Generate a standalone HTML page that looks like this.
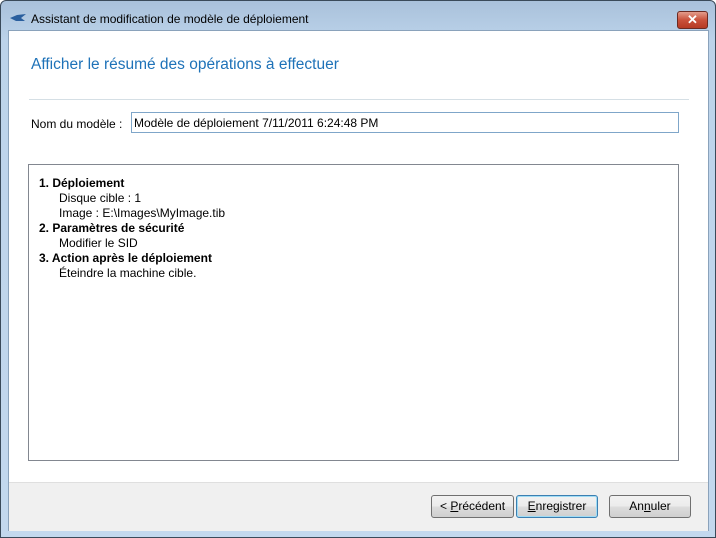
<!DOCTYPE html>
<html><head><meta charset="utf-8"><style>
body{margin:0;width:716px;height:538px;overflow:hidden;font-family:"Liberation Sans",sans-serif;font-size:12px;color:#000;}
.frame{position:absolute;left:0;top:0;width:714px;height:536px;border:1px solid #3a4a5a;border-radius:6px 6px 0 0;background:linear-gradient(#a9c1db,#bcd3ea 40px,#c3d8ee);}
.title{position:absolute;left:30px;top:11px;font-size:12px;color:#000;}
.close{position:absolute;left:676px;top:10px;width:29px;height:16px;border:1px solid #6b2a22;border-radius:3px;background:linear-gradient(#e39d8c,#c9513b 50%,#b63a24);color:#fff;font-weight:bold;text-align:center;line-height:15px;font-size:13px;}
.client{position:absolute;left:7px;top:29px;width:701px;height:501px;background:#fff;border:1px solid #8aa2bb;box-sizing:border-box;}
.footer{position:absolute;left:0;top:451px;width:699px;height:48px;background:#f0f0f0;border-top:1px solid #dfdfdf;}
.h{position:absolute;left:22px;top:25px;font-size:15.5px;color:#1e72b8;}
.sep{position:absolute;left:20px;top:68px;width:660px;height:1px;background:#d5dfe5;}
.lbl{position:absolute;left:22px;top:86px;}
.inp{position:absolute;left:122px;top:81px;width:548px;height:21px;border:1px solid #7fa6c9;box-sizing:border-box;padding:3px 2px;}
.box{position:absolute;left:19px;top:133px;width:651px;height:297px;border:1px solid #828790;box-sizing:border-box;padding:11px 10px;line-height:15px;}
.box b{display:block}.box div{padding-left:20px}
.btn{position:absolute;height:23px;border:1px solid #707070;border-radius:3px;background:linear-gradient(#f2f2f2,#ebebeb 50%,#dddddd 51%,#cfcfcf);box-sizing:border-box;text-align:center;line-height:20px;}
</style></head><body>
<div class="frame">
<svg style="position:absolute;left:8px;top:12px" width="18" height="10"><path d="M1 5 L8 2 L17 1 L12 5 L16 8 L7 8 Z" fill="#2a5f9e"/></svg>
<div class="title">Assistant de modification de modèle de déploiement</div>
<div class="close">✕</div>
<div class="client">
<div class="h">Afficher le résumé des opérations à effectuer</div>
<div class="sep"></div>
<div class="lbl">Nom du modèle :</div>
<div class="inp">Modèle de déploiement 7/11/2011 6:24:48 PM</div>
<div class="box"><b>1. Déploiement</b><div>Disque cible : 1</div><div>Image : E:\Images\MyImage.tib</div><b>2. Paramètres de sécurité</b><div>Modifier le SID</div><b>3. Action après le déploiement</b><div>Éteindre la machine cible.</div></div>
<div class="footer">
<div class="btn" style="left:422px;width:83px;top:12px">&lt; <u>P</u>récédent</div>
<div class="btn" style="left:507px;width:82px;top:12px;border-color:#3c7fb1;box-shadow:inset 0 0 0 1px #9fdcf5"><u>E</u>nregistrer</div>
<div class="btn" style="left:600px;width:82px;top:12px">An<u>n</u>uler</div>
</div>
</div>
</div>
</body></html>
